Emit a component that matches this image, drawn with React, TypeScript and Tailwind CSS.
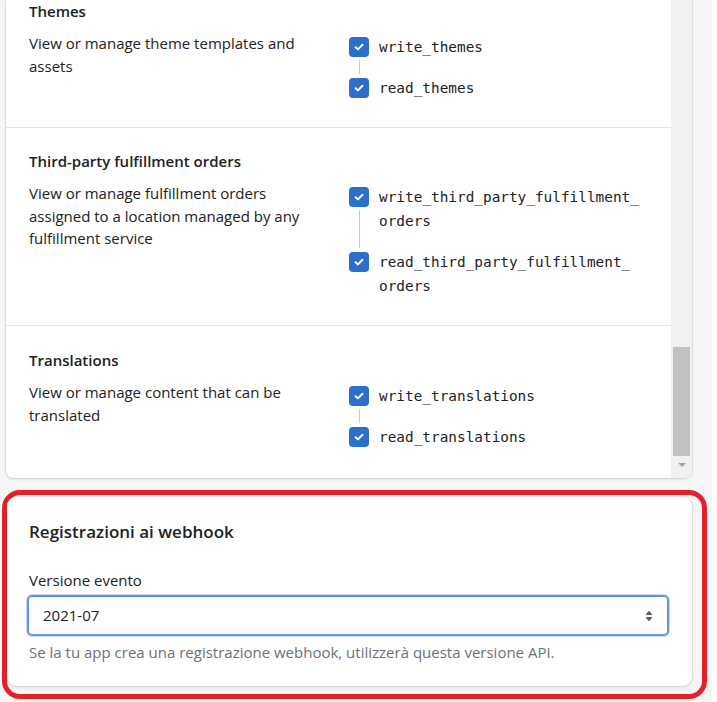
import React from "react";

type Scope = { lines: string[] };
type Section = { title: string; desc: string; scopes: Scope[] };

const sections: Section[] = [
  {
    title: "Themes",
    desc: "View or manage theme templates and assets",
    scopes: [{ lines: ["write_themes"] }, { lines: ["read_themes"] }],
  },
  {
    title: "Third-party fulfillment orders",
    desc: "View or manage fulfillment orders assigned to a location managed by any fulfillment service",
    scopes: [
      { lines: ["write_third_party_fulfillment_", "orders"] },
      { lines: ["read_third_party_fulfillment_", "orders"] },
    ],
  },
  {
    title: "Translations",
    desc: "View or manage content that can be translated",
    scopes: [{ lines: ["write_translations"] }, { lines: ["read_translations"] }],
  },
];

function Checkbox() {
  return (
    <div className="flex h-5 w-5 shrink-0 items-center justify-center rounded-[4px] bg-[#2c6ecb]">
      <svg width="14" height="14" viewBox="0 0 14 14" fill="none">
        <path d="M3.6 7.2l2.3 2.2 4.6-4.6" stroke="#ffffff" strokeWidth="2" strokeLinecap="round" strokeLinejoin="round" />
      </svg>
    </div>
  );
}

function ScopeItem({ scope, last }: { scope: Scope; last: boolean }) {
  return (
    <div className="flex">
      <div className="flex w-5 flex-col items-center pt-[2px]">
        <Checkbox />
        {!last && <div className="mt-[3px] mb-[2px] w-px flex-1 bg-[#c9cccf]" />}
      </div>
      <div
        className={
          last
            ? "ml-[10px] font-['DejaVu_Sans_Mono',monospace] text-[14.4px] leading-[24px] text-[#202223]"
            : "ml-[10px] pb-[17px] font-['DejaVu_Sans_Mono',monospace] text-[14.4px] leading-[24px] text-[#202223]"
        }
      >
        {scope.lines.map((l, i) => (
          <div key={i}>{l}</div>
        ))}
      </div>
    </div>
  );
}

function SectionBlock({ s, index }: { s: Section; index: number }) {
  const cls =
    index === 0
      ? "px-[23px] pt-[1px] pb-[27px]"
      : index === 1
      ? "border-t border-[#e1e3e5] px-[23px] pt-[23px] pb-[27px]"
      : "border-t border-[#e1e3e5] px-[23px] pt-[24px] pb-[29px]";
  return (
    <div className={cls}>
      <div className="text-[15px] font-semibold leading-[20px] text-[#202223]">{s.title}</div>
      <div className="mt-[11px] flex">
        <div className="w-[300px] shrink-0 text-[15px] leading-[22.5px] text-[#202223]">{s.desc}</div>
        <div className="ml-[20px] mt-[3px] flex flex-col">
          {s.scopes.map((sc, i) => (
            <ScopeItem key={i} scope={sc} last={i === s.scopes.length - 1} />
          ))}
        </div>
      </div>
    </div>
  );
}

export default function App() {
  return (
    <div className="h-[702px] w-[717px] overflow-hidden bg-white font-['Open_Sans',sans-serif]">
      <div className="h-[702px] w-[712px] bg-[#f6f6f7]">
        {/* Top scrolled card */}
        <div className="ml-[6px] flex w-[686px] overflow-hidden rounded-b-[8px] bg-white shadow-[0_0_0_1px_rgba(63,63,68,0.06),0_1px_3px_rgba(63,63,68,0.18)]">
          <div className="flex-1">
            {sections.map((s, i) => (
              <SectionBlock key={i} s={s} index={i} />
            ))}
          </div>
          <div className="flex w-[21px] flex-col items-center bg-[#f1f1f1]">
            <div className="h-[347px]" />
            <div className="h-[109px] w-[17px] bg-[#c1c1c1]" />
            <div className="mt-[7px] h-0 w-0 border-x-[4px] border-t-[4px] border-x-transparent border-t-[#a3a3a3]" />
          </div>
        </div>

        {/* Annotated card */}
        <div className="ml-[2px] mt-[12px] w-[705px] rounded-[18px] border-[5px] border-[#e3212b] pl-0 pt-[2px] pr-[10px] pb-[8px]">
          <div className="rounded-[9px] bg-white px-[22px] pt-[23px] pb-[24px] shadow-[0_0_0_1px_rgba(63,63,68,0.06),0_1px_3px_rgba(63,63,68,0.18)]">
            <div className="text-[17px] font-semibold leading-[24px] text-[#202223]">Registrazioni ai webhook</div>
            <div className="mt-[26px] text-[15px] leading-[20px] text-[#202223]">Versione evento</div>
            <div className="-ml-[2px] mt-[5px] flex h-[41px] w-[642px] items-center justify-between rounded-[5px] border-[2px] border-[#5e95e5] pl-[14px] pr-[8px] shadow-[0_0_0_1px_rgba(150,185,240,0.5)]">
              <span className="text-[15px] text-[#202223]">2021-07</span>
              <svg width="20" height="20" viewBox="0 0 20 20" fill="#5c5f62">
                <path d="M7.676 9h4.648c.563 0 .879-.603.53-1.014L10.531 5.24a.708.708 0 0 0-1.062 0L7.145 7.986C6.798 8.397 7.113 9 7.676 9zm4.648 2H7.676c-.563 0-.878.603-.53 1.014l2.323 2.746a.708.708 0 0 0 1.062 0l2.324-2.746c.348-.411.032-1.014-.531-1.014z" />
              </svg>
            </div>
            <div className="mt-[6px] text-[15px] leading-[20px] text-[#6d7175]">
              Se la tu app crea una registrazione webhook, utilizzerà questa versione API.
            </div>
          </div>
        </div>
      </div>
    </div>
  );
}
